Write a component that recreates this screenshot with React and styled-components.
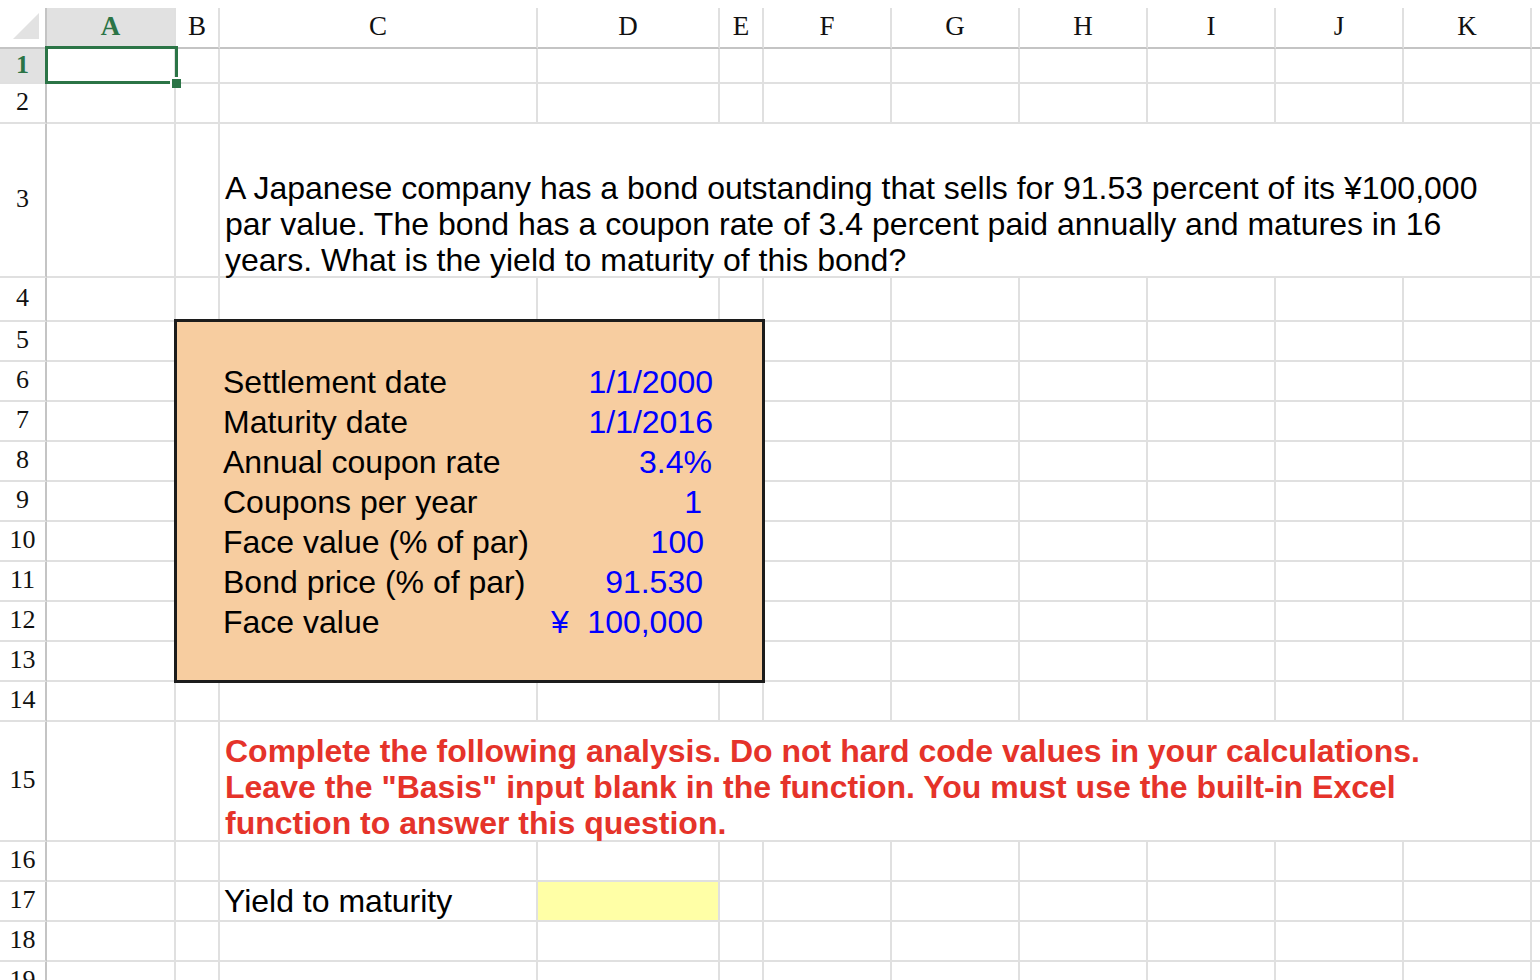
import React from "react";
import styled, { createGlobalStyle, css } from "styled-components";

const GlobalStyle = createGlobalStyle`
  html, body {
    margin: 0;
    padding: 0;
    background: #ffffff;
    overflow: hidden;
  }
  body {
    font-family: "Liberation Sans", Arial, sans-serif;
  }
`;

const GRID = "#e0e0e0";
const HEAD_LINE = "#c4c4c4";
const GREEN = "#2b7446";

const COLS = ["A", "B", "C", "D", "E", "F", "G", "H", "I", "J", "K", "L"];
const COL_WIDTHS = [47, 129, 44, 318, 182, 44, 128, 128, 128, 128, 128, 128, 128];
const ROW_HEIGHTS = [35, 40, 154, 44, 40, 40, 40, 40, 40, 40, 40, 40, 40, 40, 120, 40, 40, 40, 40];

const Page = styled.div`
  padding-top: 8px;
  width: 1540px;
  height: 980px;
  overflow: hidden;
  box-sizing: border-box;
`;

const Sheet = styled.div`
  display: grid;
  grid-template-columns: ${COL_WIDTHS.map((w) => `${w}px`).join(" ")};
  grid-template-rows: 41px ${ROW_HEIGHTS.map((h) => `${h}px`).join(" ")};
  width: max-content;
`;

const Corner = styled.div`
  box-sizing: border-box;
  border-right: 2px solid ${HEAD_LINE};
  border-bottom: 2px solid ${HEAD_LINE};
  display: flex;
  align-items: flex-end;
  justify-content: flex-end;
  padding: 0 6px 8px 0;
`;

const ColHead = styled.div`
  box-sizing: border-box;
  border-right: 2px solid ${GRID};
  border-bottom: 2px solid ${HEAD_LINE};
  display: flex;
  align-items: center;
  justify-content: center;
  font-family: "Liberation Serif", "Times New Roman", serif;
  font-size: 27px;
  color: #111;
  padding-bottom: 2px;
  background: ${(p) => (p.$active ? "#e1e1e1" : "#ffffff")};
  ${(p) =>
    p.$active &&
    css`
      color: ${GREEN};
      font-weight: 700;
    `}
`;

const RowHead = styled.div`
  box-sizing: border-box;
  border-right: 2px solid ${HEAD_LINE};
  border-bottom: 2px solid ${GRID};
  display: flex;
  align-items: center;
  justify-content: center;
  font-family: "Liberation Serif", "Times New Roman", serif;
  font-size: 26px;
  color: #111;
  padding-bottom: 2px;
  background: ${(p) => (p.$active ? "#e1e1e1" : "#ffffff")};
  ${(p) =>
    p.$active &&
    css`
      color: ${GREEN};
      font-weight: 700;
    `}
`;

const Cell = styled.div`
  box-sizing: border-box;
  position: relative;
  border-right: 2px solid ${GRID};
  border-bottom: 2px solid ${GRID};
  background: ${(p) => p.$fill || "transparent"};
  display: flex;
  align-items: center;
  padding-left: 4px;
  font-size: 32px;
  color: #000;
  white-space: nowrap;
  ${(p) =>
    p.$selected &&
    css`
      z-index: 3;
      &::after {
        content: "";
        position: absolute;
        left: -2px;
        top: -3px;
        right: -4px;
        bottom: -2px;
        border: 3px solid ${GREEN};
        pointer-events: none;
      }
    `}
`;

const FillHandle = styled.span`
  position: absolute;
  right: -7px;
  bottom: -6px;
  width: 9px;
  height: 9px;
  background: ${GREEN};
  border-left: 2px solid #fff;
  border-top: 2px solid #fff;
  z-index: 4;
`;

const WrapCell = styled.div`
  grid-column: 4 / 13;
  grid-row: ${(p) => p.$row};
  box-sizing: border-box;
  background: #fff;
  border-right: 2px solid ${GRID};
  border-bottom: 2px solid ${GRID};
  display: flex;
  flex-direction: column;
  justify-content: flex-end;
  padding-left: 5px;
  z-index: 1;
`;

const Para = styled.div`
  margin-bottom: ${(p) => -p.$drop}px;
  color: ${(p) => (p.$alert ? "#e5332a" : "#000")};
  font-weight: ${(p) => (p.$alert ? 700 : 400)};
  font-size: 32px;
`;

const Line = styled.div`
  white-space: nowrap;
  line-height: 36px;
`;

const InputBox = styled.div`
  grid-column: 3 / 7;
  grid-row: 6 / 15;
  margin: -3px -1px -1px -2px;
  background: #f7cda0;
  border: 3px solid #1c1c1c;
  display: grid;
  grid-template-columns: 43px 318px 182px 1fr;
  grid-auto-rows: 40px;
  padding-top: 40px;
  overflow: hidden;
  z-index: 1;
`;

const Label = styled.div`
  grid-column: 2;
  display: flex;
  align-items: center;
  padding-left: 3px;
  font-size: 32px;
  line-height: 1;
  color: #000;
  white-space: nowrap;
`;

const Value = styled.div`
  grid-column: 3;
  display: flex;
  align-items: center;
  justify-content: ${(p) => (p.$currency ? "space-between" : "flex-end")};
  padding-right: ${(p) => p.$pr}px;
  padding-left: ${(p) => (p.$currency ? "13px" : "0")};
  font-size: 32px;
  line-height: 1;
  color: #0000ff;
  white-space: nowrap;
`;

const inputs = [
  { label: "Settlement date", value: "1/1/2000", pr: 7 },
  { label: "Maturity date", value: "1/1/2016", pr: 7 },
  { label: "Annual coupon rate", value: "3.4%", pr: 8 },
  { label: "Coupons per year", value: "1", pr: 18 },
  { label: "Face value (% of par)", value: "100", pr: 16 },
  { label: "Bond price (% of par)", value: "91.530", pr: 17 },
  { label: "Face value", value: "100,000", pr: 17, currency: "¥" },
];

const isCovered = (row, colIdx) => {
  if ((row === 3 || row === 15) && colIdx >= 2 && colIdx <= 10) return true;
  if (row >= 5 && row <= 13 && colIdx >= 1 && colIdx <= 4) return true;
  return false;
};

function CornerMark() {
  return (
    <svg width="26" height="26" viewBox="0 0 26 26">
      <polygon points="26,0 26,26 0,26" fill="#e2e2e2" />
    </svg>
  );
}

function renderCell(row, colIdx) {
  const key = `${row}-${colIdx}`;
  if (row === 1 && colIdx === 0) {
    return (
      <Cell key={key} $selected>
        <FillHandle />
      </Cell>
    );
  }
  if (row === 17 && colIdx === 2) {
    return <Cell key={key}>Yield to maturity</Cell>;
  }
  if (row === 17 && colIdx === 3) {
    return <Cell key={key} $fill="#ffffa6" />;
  }
  return <Cell key={key} />;
}

export default function App() {
  const body = [];
  ROW_HEIGHTS.forEach((_, i) => {
    const row = i + 1;
    body.push(
      <RowHead key={`rh-${row}`} $active={row === 1}>
        {row}
      </RowHead>
    );
    COLS.forEach((_, c) => {
      if (!isCovered(row, c)) body.push(renderCell(row, c));
    });
  });

  return (
    <>
      <GlobalStyle />
      <Page>
        <Sheet>
          <WrapCell $row={4}>
            <Para $drop={2}>
              <Line>A Japanese company has a bond outstanding that sells for 91.53 percent of its ¥100,000</Line>
              <Line>par value. The bond has a coupon rate of 3.4 percent paid annually and matures in 16</Line>
              <Line>years. What is the yield to maturity of this bond?</Line>
            </Para>
          </WrapCell>
          <InputBox>
            {inputs.map((it) => (
              <React.Fragment key={it.label + it.value}>
                <Label>{it.label}</Label>
                <Value $pr={it.pr} $currency={!!it.currency}>
                  {it.currency && <span>{it.currency}</span>}
                  <span>{it.value}</span>
                </Value>
              </React.Fragment>
            ))}
          </InputBox>
          <WrapCell $row={16}>
            <Para $alert $drop={1}>
              <Line>Complete the following analysis. Do not hard code values in your calculations.</Line>
              <Line>Leave the "Basis" input blank in the function. You must use the built-in Excel</Line>
              <Line>function to answer this question.</Line>
            </Para>
          </WrapCell>

          <Corner>
            <CornerMark />
          </Corner>
          {COLS.map((c) => (
            <ColHead key={c} $active={c === "A"}>
              {c}
            </ColHead>
          ))}
          {body}
        </Sheet>
      </Page>
    </>
  );
}
